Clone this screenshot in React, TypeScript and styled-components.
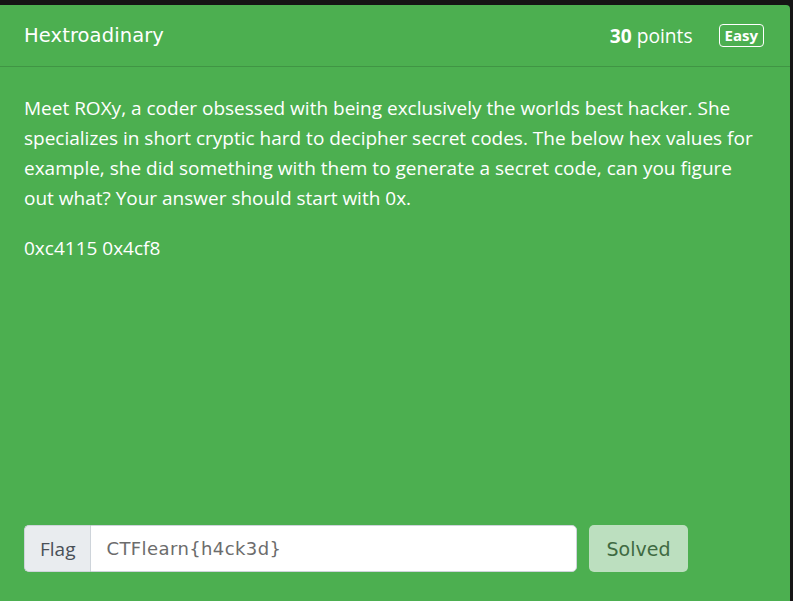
import React from "react";
import styled, { createGlobalStyle } from "styled-components";

const GlobalStyle = createGlobalStyle`
  html, body {
    margin: 0;
    padding: 0;
    background: #151515;
    overflow: hidden;
  }
  body {
    padding-top: 5px;
    font-family: "Open Sans", "Noto Sans", sans-serif;
  }
`;

const challenge = {
  title: "Hextroadinary",
  points: 30,
  difficulty: "Easy",
  description:
    "Meet ROXy, a coder obsessed with being exclusively the worlds best hacker. She specializes in short cryptic hard to decipher secret codes. The below hex values for example, she did something with them to generate a secret code, can you figure out what? Your answer should start with 0x.",
  data: "0xc4115 0x4cf8",
  flag: "CTFlearn{h4ck3d}",
};

const App = () => (
  <>
    <GlobalStyle />
    <Card>
      <CardHeader>
        <Title>{challenge.title}</Title>
        <Meta>
          <Points>
            <strong>{challenge.points}</strong> points
          </Points>
          <Badge>{challenge.difficulty}</Badge>
        </Meta>
      </CardHeader>
      <CardBody>
        <Problem>
          <Text>{challenge.description}</Text>
          <Text>{challenge.data}</Text>
        </Problem>
        <FlagForm>
          <InputGroup>
            <Addon>Flag</Addon>
            <FlagInput readOnly value={challenge.flag} />
          </InputGroup>
          <SolvedButton disabled>Solved</SolvedButton>
        </FlagForm>
      </CardBody>
    </Card>
  </>
);

export default App;

const Card = styled.div`
  width: 790px;
  height: 640px;
  background: #4caf50;
  border-radius: 0 4px 4px 0;
  color: #fff;
  display: flex;
  flex-direction: column;
`;

const CardHeader = styled.div`
  height: 62px;
  box-sizing: border-box;
  padding: 0 26px 0 24px;
  display: flex;
  align-items: center;
  justify-content: space-between;
  border-bottom: 1px solid rgba(0, 0, 0, 0.15);
`;

const Title = styled.h5`
  margin: 0;
  font-family: "DejaVu Sans", sans-serif;
  font-weight: 400;
  font-size: 19.5px;
  letter-spacing: 0.1px;
`;

const Meta = styled.div`
  display: flex;
  align-items: center;
  gap: 26px;
`;

const Points = styled.span`
  font-size: 19.2px;
  strong {
    font-weight: 700;
  }
`;

const Badge = styled.span`
  border: 1px solid #fff;
  border-radius: 4px;
  padding: 1px 5px 2px;
  font-size: 15px;
  font-weight: 700;
  line-height: 18px;
`;

const CardBody = styled.div`
  padding: 26px 24px 24px;
  display: flex;
  flex-direction: column;
`;

const Problem = styled.div`
  min-height: 432px;
`;

const Text = styled.p`
  margin: 0 0 20px;
  font-size: 19px;
  line-height: 30px;
`;

const FlagForm = styled.form`
  display: flex;
  align-items: stretch;
  gap: 12px;
`;

const InputGroup = styled.div`
  display: flex;
  width: 553px;
  height: 47px;
`;

const Addon = styled.span`
  display: flex;
  align-items: center;
  padding: 0 15px;
  background: #e9ecef;
  color: #495057;
  border: 1px solid #ced4da;
  border-right: none;
  border-radius: 5px 0 0 5px;
  font-size: 19px;
`;

const FlagInput = styled.input`
  flex: 1;
  min-width: 0;
  border: 1px solid #ced4da;
  border-radius: 0 5px 5px 0;
  padding: 0 15px;
  font-family: "DejaVu Sans", sans-serif;
  font-size: 18px;
  letter-spacing: 0.4px;
  color: #6c6c6c;
  outline: none;
`;

const SolvedButton = styled.button`
  width: 99px;
  border: none;
  border-radius: 5px;
  background: #bcdfbf;
  color: #3f6a42;
  font-family: "DejaVu Sans", sans-serif;
  font-size: 19px;
`;
